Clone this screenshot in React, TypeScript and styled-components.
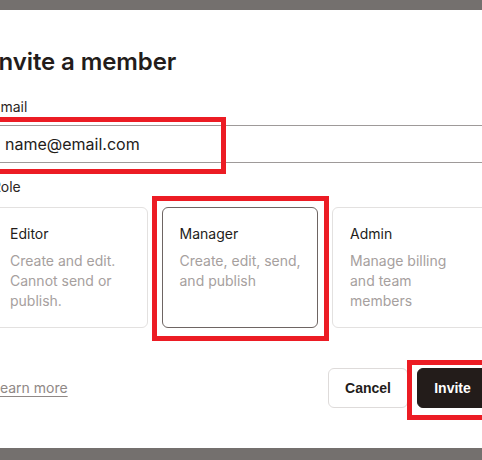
import React from "react";
import styled, { createGlobalStyle } from "styled-components";

const Global = createGlobalStyle`
  html, body { margin: 0; padding: 0; background: #74706e; }
  body { overflow: hidden; font-family: Inter, "Noto Sans", sans-serif; }
  * { box-sizing: border-box; }
`;

const Root = styled.div`
  position: relative;
  width: 482px;
  height: 460px;
  overflow: hidden;
  background: #74706e;
  padding-top: 10px;
`;

const Modal = styled.div`
  width: 544px;
  height: 438px;
  margin-left: -32px;
  background: #ffffff;
  padding: 36px 24px 40px;
  display: flex;
  flex-direction: column;
`;

const Title = styled.h1`
  margin: 0;
  font-size: 24px;
  line-height: 32px;
  font-weight: 600;
  color: #231c1a;
  letter-spacing: -0.1px;
`;

const Label = styled.label<{ $top: number }>`
  display: block;
  margin-top: ${(p) => p.$top}px;
  font-size: 14px;
  line-height: 20px;
  font-weight: 400;
  color: #2b2523;
`;

const Input = styled.input`
  display: block;
  width: 100%;
  height: 41px;
  margin-top: 8px;
  border: 1.5px solid #9e9a99;
  border-radius: 4px;
  padding: 0 12px;
  font-family: Inter, "Noto Sans", sans-serif;
  font-size: 16px;
  color: #231c1a;
  background: #fff;
  outline: none;
`;

const Cards = styled.div`
  display: grid;
  grid-template-columns: repeat(3, 156px);
  gap: 14px;
  margin-top: 10px;
`;

const Card = styled.div<{ $selected?: boolean }>`
  border: ${(p) => (p.$selected ? "1.5px solid #6e6563" : "1px solid #e3e1e0")};
  border-radius: 6px;
  padding: ${(p) => (p.$selected ? "15.5px 14.5px 15.5px 16.5px" : "16px 15px 16px 17px")};
  display: flex;
  flex-direction: column;
  gap: 7px;
  background: #fff;
`;

const CardTitle = styled.div`
  font-size: 14px;
  line-height: 20px;
  font-weight: 400;
  color: #231c1a;
`;

const CardDesc = styled.div`
  font-size: 14px;
  line-height: 20px;
  color: #a6a09e;
`;

const DescLine = styled.span`
  display: block;
  white-space: nowrap;
`;

const Footer = styled.div`
  margin-top: 40px;
  display: flex;
  align-items: center;
  justify-content: space-between;
`;

const LearnMore = styled.a`
  font-size: 14px;
  line-height: 20px;
  color: #8f8886;
  text-decoration: underline;
  text-underline-offset: 3px;
  cursor: pointer;
`;

const Actions = styled.div`
  display: flex;
  gap: 9px;
`;

const Button = styled.button<{ $primary?: boolean }>`
  height: 40px;
  padding: 0 16px;
  border-radius: 6px;
  font-family: "Liberation Sans", Arial, sans-serif;
  font-weight: 700;
  font-size: 14px;
  border: 1px solid ${(p) => (p.$primary ? "#231c1a" : "#dedbda")};
  background: ${(p) => (p.$primary ? "#231c1a" : "#ffffff")};
  color: ${(p) => (p.$primary ? "#ffffff" : "#231c1a")};
  min-width: ${(p) => (p.$primary ? "71px" : "80px")};
`;

const Highlight = styled.div`
  position: absolute;
  border: 5px solid #ec1c24;
  pointer-events: none;
`;

const roles = [
  { name: "Editor", lines: ["Create and edit.", "Cannot send or", "publish."] },
  { name: "Manager", lines: ["Create, edit, send,", "and publish"], selected: true },
  { name: "Admin", lines: ["Manage billing", "and team", "members"] },
];

export default function App() {
  return (
    <>
      <Global />
      <Root>
        <Modal>
          <Title>Invite a member</Title>
          <Label $top={19}>Email</Label>
          <Input defaultValue="name@email.com" />
          <Label $top={14}>Role</Label>
          <Cards>
            {roles.map((r) => (
              <Card key={r.name} $selected={r.selected}>
                <CardTitle>{r.name}</CardTitle>
                <CardDesc>
                  {r.lines.map((l) => (
                    <DescLine key={l}>{l}</DescLine>
                  ))}
                </CardDesc>
              </Card>
            ))}
          </Cards>
          <Footer>
            <LearnMore>Learn more</LearnMore>
            <Actions>
              <Button>Cancel</Button>
              <Button $primary>Invite</Button>
            </Actions>
          </Footer>
        </Modal>
        <Highlight style={{ left: -10, top: 117, width: 236, height: 57 }} />
        <Highlight style={{ left: 152, top: 196, width: 177, height: 145 }} />
        <Highlight style={{ left: 407, top: 360, width: 100, height: 60 }} />
      </Root>
    </>
  );
}
